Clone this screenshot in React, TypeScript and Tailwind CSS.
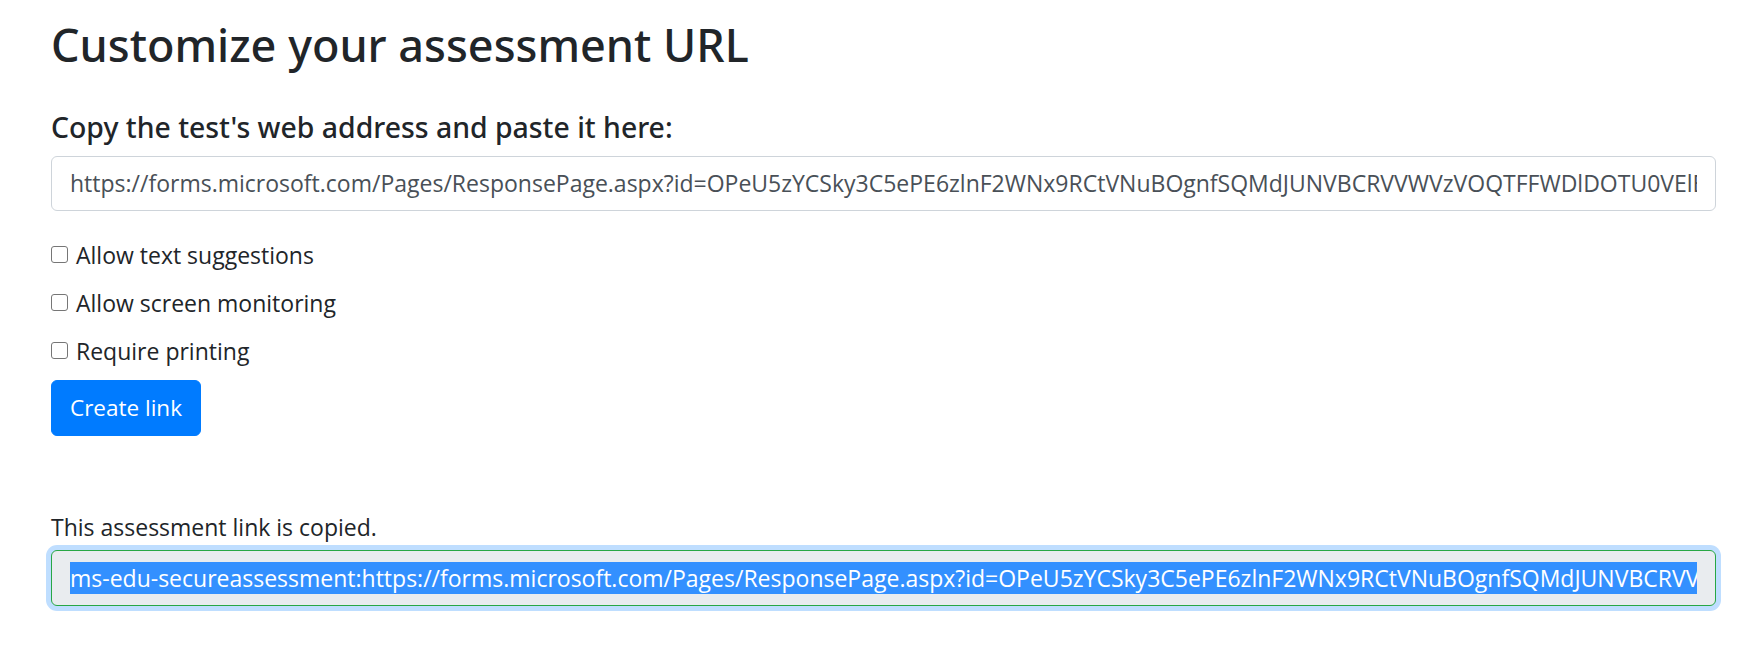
import React from 'react';

const testUrl =
  'https://forms.microsoft.com/Pages/ResponsePage.aspx?id=OPeU5zYCSky3C5ePE6zlnF2WNx9RCtVNuBOgnfSQMdJUNVBCRVVWVzVOQTFFWDlDOTU0VElEQy4u';

const options = ['Allow text suggestions', 'Allow screen monitoring', 'Require printing'];

export default function App() {
  return (
    <div className="min-h-screen bg-white pl-[51px] pr-[44px] pt-[16px] font-['Open_Sans',sans-serif] text-[23px] leading-[36px] text-[#212529]">
      {/* Title */}
      <h2 className="font-['Noto_Sans',sans-serif] text-[45px] leading-[57.6px] font-medium">
        Customize your assessment URL
      </h2>

      <h5 className="mt-[35px] mb-[11px] font-['Noto_Sans',sans-serif] text-[28.4px] leading-[36px] font-medium">
        Copy the test's web address and paste it here:
      </h5>

      {/* Source URL field */}
      <div className="flex h-[55px] items-center rounded-[6px] border-[1.5px] border-[#ced4da] bg-white px-[18px]">
        <div className="overflow-hidden whitespace-nowrap text-[#495057]">{testUrl}</div>
      </div>

      {/* Options */}
      <div className="mt-[26px] flex flex-col gap-[12px]">
        {options.map((label) => (
          <label key={label} className="flex h-[36px] items-center">
            <input
              type="checkbox"
              className="mr-[8px] h-[17px] w-[17px] appearance-none rounded-[3px] border-[1.5px] border-[#767676] bg-white"
            />
            <span>{label}</span>
          </label>
        ))}
      </div>

      <button className="mt-[11px] h-[56px] rounded-[6px] border border-[#007bff] bg-[#007bff] px-[18px] text-[22.5px] text-white">
        Create link
      </button>

      {/* Result */}
      <p className="mt-[73px]">This assessment link is copied.</p>
      <div className="mt-[5px] flex h-[56px] items-center rounded-[6px] border-[1.5px] border-[#28a745] bg-[#e9ecef] px-[18px] ring-[5px] ring-[#bfdeff]">
        <div className="overflow-hidden whitespace-nowrap">
          <span className="bg-[#3390ff] text-white">
            ms-edu-secureassessment:{testUrl}#enforceSecureConfig=true
          </span>
        </div>
      </div>
    </div>
  );
}
